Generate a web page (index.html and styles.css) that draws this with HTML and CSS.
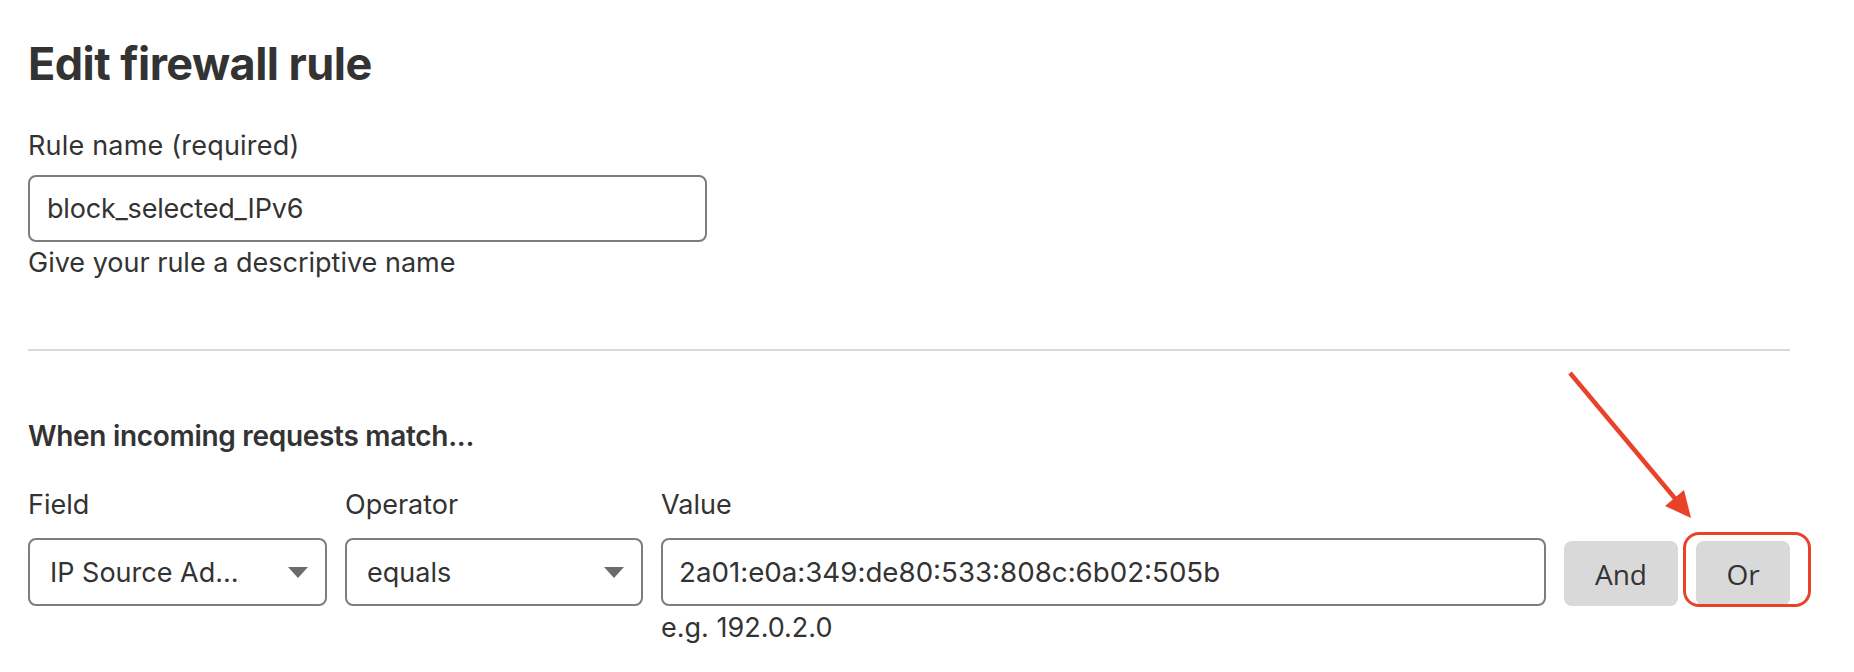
FILE: index.html
```html
<!DOCTYPE html>
<html lang="en">
<head>
<meta charset="utf-8">
<title>Edit firewall rule</title>
<link rel="stylesheet" href="styles.css">
</head>
<body>
<main class="page">
  <h1 class="title">Edit firewall rule</h1>

  <section class="field-block">
    <label class="label rule-label" for="rule-name">Rule name (required)</label>
    <input class="text-input name-input" id="rule-name" type="text" value="block_selected_IPv6">
    <p class="hint">Give your rule a descriptive name</p>
  </section>

  <hr class="divider">

  <h2 class="subtitle">When incoming requests match...</h2>

  <div class="expr">
    <div class="label">Field</div>
    <div class="label">Operator</div>
    <div class="label">Value</div>
    <div></div>
    <div></div>

    <div class="select">
      <span class="select-text">IP Source Ad…</span>
      <svg class="caret" width="20" height="11" viewBox="0 0 20 11"><path d="M0 0 H20 L10 11 Z" fill="#6b6b6b"/></svg>
    </div>
    <div class="select">
      <span class="select-text">equals</span>
      <svg class="caret" width="20" height="11" viewBox="0 0 20 11"><path d="M0 0 H20 L10 11 Z" fill="#6b6b6b"/></svg>
    </div>
    <input class="text-input value-input" type="text" value="2a01:e0a:349:de80:533:808c:6b02:505b">
    <button class="btn" type="button">And</button>
    <div class="highlight">
      <button class="btn" type="button">Or</button>
    </div>

    <div></div>
    <div></div>
    <p class="hint">e.g. 192.0.2.0</p>
  </div>

  <svg class="arrow" width="160" height="170" viewBox="1550 360 160 170">
    <line x1="1570" y1="373" x2="1678" y2="502" stroke="#e8432a" stroke-width="4.5"/>
    <polygon points="1691,518 1665,506 1684,490" fill="#e8432a"/>
  </svg>
</main>
</body>
</html>
```

FILE: styles.css
```css
* { box-sizing: border-box; }

html, body {
  margin: 0;
  padding: 0;
  background: #ffffff;
}

body {
  font-family: Inter, "Noto Sans", "Liberation Sans", sans-serif;
  color: #333333;
}

.page {
  position: relative;
  padding: 37px 0 0 28px;
  width: 1854px;
  height: 672px;
}

.title {
  margin: 0;
  font-size: 45px;
  line-height: 54px;
  font-weight: 700;
  letter-spacing: -0.55px;
  color: #333333;
}

.field-block {
  margin-top: 39px;
  display: flex;
  flex-direction: column;
  align-items: flex-start;
}

.label {
  display: block;
  font-size: 27px;
  line-height: 32px;
  font-weight: 400;
  color: #333333;
}

.rule-label {
  letter-spacing: 0.2px;
}

.text-input {
  font-family: Inter, "Noto Sans", "Liberation Sans", sans-serif;
  font-size: 27px;
  color: #333333;
  border: 2px solid #7d7d7d;
  border-radius: 8px;
  background: #ffffff;
  outline: none;
  height: 67px;
  padding: 0 17px;
  margin: 0;
}

.name-input {
  margin-top: 13px;
  width: 679px;
  letter-spacing: -0.2px;
}

.hint {
  margin: 5px 0 0;
  font-size: 27px;
  line-height: 32px;
  color: #333333;
}

.divider {
  margin: 70px 0 0;
  width: 1762px;
  height: 2px;
  border: 0;
  background: #d9d9d9;
}

.subtitle {
  margin: 68px 0 0;
  font-size: 28px;
  line-height: 34px;
  font-weight: 600;
  letter-spacing: -0.3px;
  color: #333333;
}

.expr {
  margin-top: 36px;
  display: grid;
  grid-template-columns: 299px 298px 885px 114px 94px;
  grid-template-rows: 32px 68px auto;
  column-gap: 18px;
  row-gap: 17px;
  width: 1762px;
}

.expr .hint {
  margin-top: -11px;
}

.select {
  display: flex;
  align-items: center;
  justify-content: space-between;
  height: 68px;
  border: 2px solid #7d7d7d;
  border-radius: 8px;
  padding: 0 17px 0 20px;
  font-size: 27px;
  color: #333333;
}

.caret {
  display: block;
  flex: none;
}

.value-input {
  width: 885px;
  height: 68px;
  font-size: 27.7px;
  padding-left: 16px;
}

.btn {
  align-self: end;
  width: 100%;
  height: 65px;
  border: 0;
  border-radius: 8px;
  background: #d9d9d9;
  color: #333333;
  font-family: "Open Sans", "Noto Sans", sans-serif;
  font-size: 28px;
  padding: 0;
  cursor: pointer;
}

.highlight {
  position: relative;
  align-self: end;
  height: 65px;
}

.highlight::after {
  content: "";
  position: absolute;
  left: -13px;
  right: -21px;
  top: -9px;
  bottom: -1px;
  border: 3.5px solid #e8432a;
  border-radius: 16px;
  pointer-events: none;
}

.arrow {
  position: absolute;
  left: 1550px;
  top: 360px;
  overflow: visible;
}
```
